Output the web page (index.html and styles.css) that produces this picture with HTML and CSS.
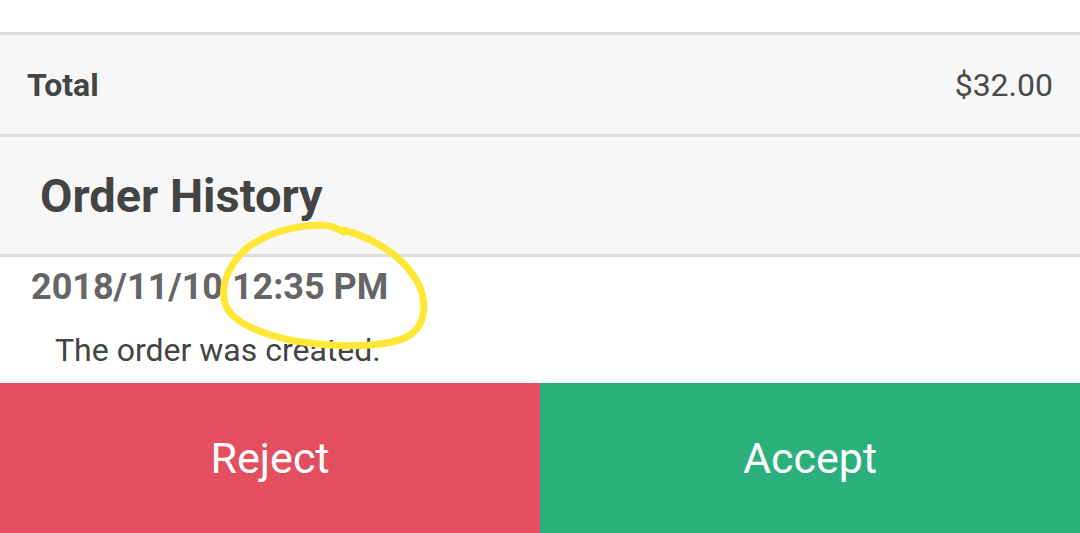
FILE: index.html
```html
<!DOCTYPE html>
<html>
<head>
<meta charset="utf-8">
<link rel="stylesheet" href="styles.css">
</head>
<body>
<div class="page">
  <div class="top-space"></div>
  <div class="total-row">
    <span class="total-label">Total</span>
    <span class="total-value">$32.00</span>
  </div>
  <div class="history-head">
    <h2 class="history-title">Order History</h2>
  </div>
  <div class="history-list">
    <div class="history-date">2018/11/10 12:35 PM</div>
    <div class="history-text">The order was created.</div>
  </div>
  <div class="actions">
    <button class="btn btn-reject">Reject</button>
    <button class="btn btn-accept">Accept</button>
  </div>
  <svg class="annotation" width="1080" height="533" viewBox="0 0 1080 533">
    <path d="M 343 230 C 375 238, 405 258, 418 283 C 428 303, 425 325, 410 335 C 395 345, 360 347, 330 345 C 290 343, 250 332, 232 315 C 218 300, 222 275, 240 255 C 255 238, 285 226, 320 225 C 332 225, 338 229, 344 232" fill="none" stroke="#ffe835" stroke-width="7" stroke-linecap="round" stroke-linejoin="round"/>
  </svg>
</div>
</body>
</html>
```

FILE: styles.css
```css
html, body {
  margin: 0;
  padding: 0;
  background: #ffffff;
}
body {
  font-family: Roboto, "Liberation Sans", sans-serif;
  width: 1080px;
  height: 533px;
  overflow: hidden;
}
.page {
  position: relative;
  width: 1080px;
  height: 533px;
  display: flex;
  flex-direction: column;
}
.top-space {
  height: 32px;
  flex: none;
}
.total-row {
  flex: none;
  height: 99px;
  background: #f7f7f7;
  border-top: 3px solid #dddddd;
  border-bottom: 3px solid #dddddd;
  display: flex;
  align-items: center;
  justify-content: space-between;
  padding: 0 27px;
}
.total-label {
  font-size: 32px;
  font-weight: 700;
  color: #444444;
}
.total-value {
  font-size: 32px;
  font-weight: 400;
  color: #4a4a4a;
}
.history-head {
  flex: none;
  height: 117px;
  background: #f7f7f7;
  border-bottom: 3px solid #dddddd;
  display: flex;
  align-items: center;
  padding: 0 40px;
}
.history-title {
  margin: 0;
  font-size: 47px;
  font-weight: 700;
  color: #444444;
}
.history-list {
  flex: none;
  height: 126px;
  box-sizing: border-box;
  padding-top: 9px;
  overflow: hidden;
}
.history-date {
  padding-left: 31px;
  font-size: 36px;
  line-height: 42px;
  font-weight: 700;
  color: #666666;
}
.history-text {
  margin-top: 23px;
  padding-left: 55px;
  font-size: 32px;
  line-height: 38px;
  color: #444444;
}
.actions {
  flex: none;
  height: 150px;
  display: flex;
}
.btn {
  flex: 1;
  border: none;
  margin: 0;
  padding: 0;
  font-family: Roboto, "Liberation Sans", sans-serif;
  font-size: 43px;
  font-weight: 400;
  color: #ffffff;
}
.btn-reject {
  background: #e34f5e;
}
.btn-accept {
  background: #2bb07b;
}
.annotation {
  position: absolute;
  left: 0;
  top: 0;
  pointer-events: none;
}
```
